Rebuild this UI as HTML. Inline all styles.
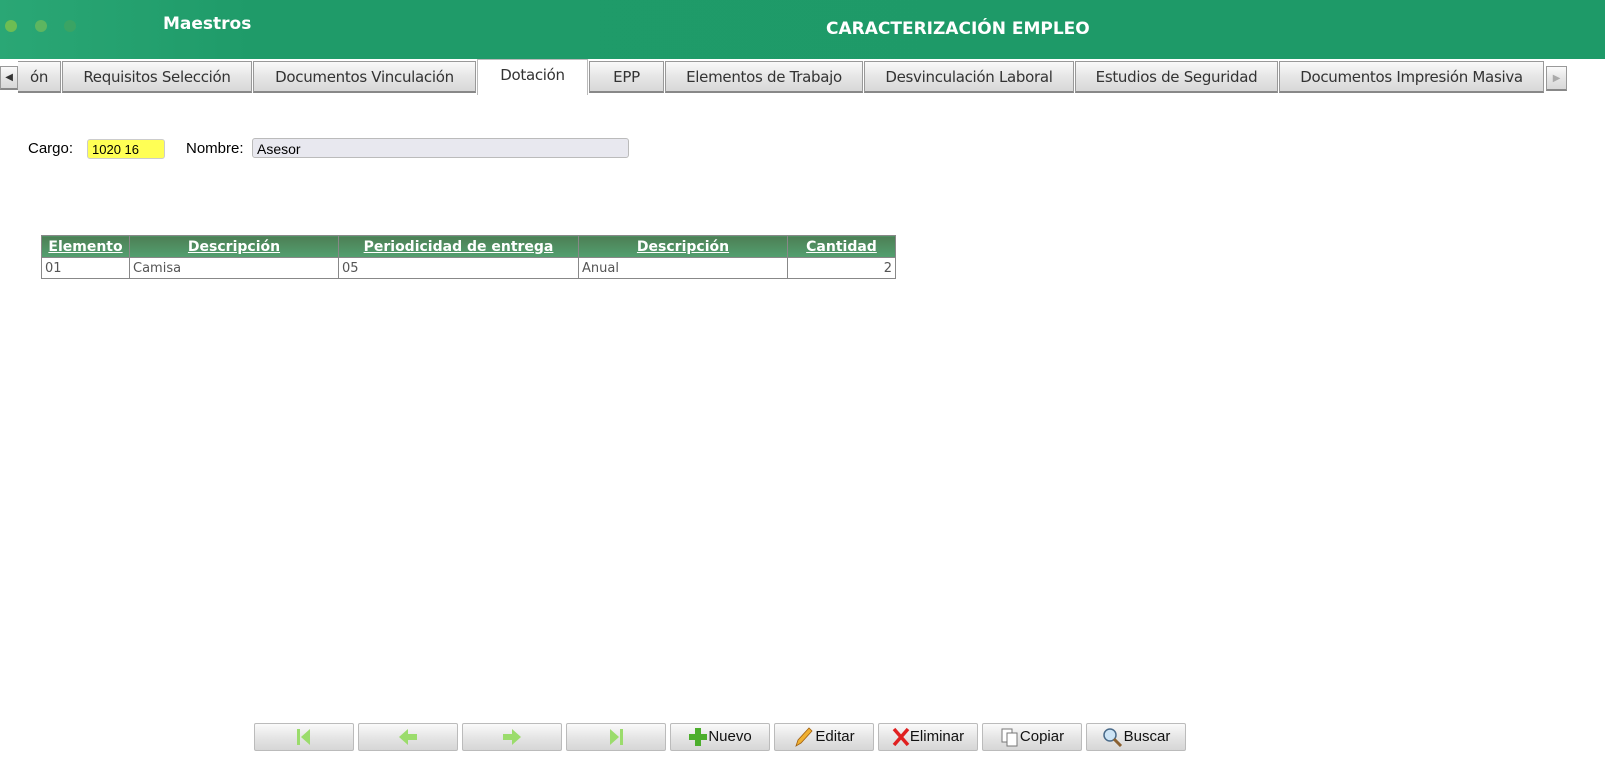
<!DOCTYPE html><html><head><meta charset="utf-8"><style>
body{margin:0;width:1605px;height:771px;background:#fff;font-family:"Liberation Sans",sans-serif;position:relative;overflow:hidden}
.hdr{position:absolute;left:0;top:0;width:1605px;height:59px;background:linear-gradient(90deg,#2aa775 0,#1f9b69 250px,#1e9a68 100%)}
.dot{position:absolute;top:20px;width:12px;height:12px;border-radius:50%}
.ht{position:absolute;color:#fff;font-weight:bold;font-family:"DejaVu Sans",sans-serif}
.tab{position:absolute;top:61px;height:32px;box-sizing:border-box;border:1px solid #999;border-bottom:2px solid #888;background:linear-gradient(#fafafa,#e6e6e6 50%,#d8d8d8);font-size:15px;color:#333;text-align:center;line-height:30px;font-family:"DejaVu Sans",sans-serif;letter-spacing:-.3px}
.tab.act{background:#fff;border-bottom:none;top:59px;height:36px;border-color:#bbb}
.btn{position:absolute;top:723px;width:100px;height:28px;box-sizing:border-box;border:1px solid #bbb;border-radius:2px;background:linear-gradient(#fafafa,#e4e4e4 55%,#d6d6d6);font-size:15px;line-height:26px;color:#111;display:flex;align-items:center;justify-content:center}
table{position:absolute;left:41px;top:235px;border-collapse:collapse;font-family:"DejaVu Sans",sans-serif;font-size:13px}
th{background:linear-gradient(#4d7f55,#53a070);color:#fff;text-decoration:underline;height:21px;padding:0;border:1px solid #888;font-size:14px}
td{border:1px solid #888;color:#555;height:20px;padding:0 3px}
</style></head><body>
<div class="hdr"></div>
<div class="dot" style="left:5px;background:#6dbd53"></div>
<div class="dot" style="left:35px;background:#5db660"></div>
<div class="dot" style="left:64px;background:#3aa464"></div>
<div class="ht" style="left:163px;top:14px;font-size:17px">Maestros</div>
<div class="ht" style="left:826px;top:19px;font-size:17px">CARACTERIZACIÓN EMPLEO</div>
<div class="tab" style="left:0;width:18px;top:66px;height:24px;line-height:22px;font-size:10px">◀</div>
<div class="tab" style="left:18px;width:43px;border-left:none">ón</div>
<div class="tab" style="left:62px;width:190px">Requisitos Selección</div>
<div class="tab" style="left:253px;width:223px">Documentos Vinculación</div>
<div class="tab act" style="left:477px;width:111px">Dotación</div>
<div class="tab" style="left:589px;width:75px">EPP</div>
<div class="tab" style="left:665px;width:198px">Elementos de Trabajo</div>
<div class="tab" style="left:864px;width:210px">Desvinculación Laboral</div>
<div class="tab" style="left:1075px;width:203px">Estudios de Seguridad</div>
<div class="tab" style="left:1279px;width:265px">Documentos Impresión Masiva</div>
<div class="tab" style="left:1546px;width:21px;top:66px;height:25px;line-height:23px;font-size:10px;color:#aaa">▶</div>
<div style="position:absolute;left:28px;top:140px;font-size:15px">Cargo:</div>
<div style="position:absolute;left:87px;top:139px;width:78px;background:#ffff55;border:1px solid #ccc;border-radius:3px;font-size:13px;line-height:19px;padding-left:4px;box-sizing:border-box;height:20px">1020 16</div>
<div style="position:absolute;left:186px;top:140px;font-size:15px">Nombre:</div>
<div style="position:absolute;left:252px;top:138px;width:377px;height:20px;background:#e8e8ef;border:1px solid #bbb;border-radius:3px;font-size:14px;line-height:21px;padding-left:4px;box-sizing:border-box">Asesor</div>
<table><tr><th style="width:87px">Elemento</th><th style="width:208px">Descripción</th><th style="width:239px">Periodicidad de entrega</th><th style="width:208px">Descripción</th><th style="width:107px">Cantidad</th></tr>
<tr><td>01</td><td>Camisa</td><td>05</td><td>Anual</td><td style="text-align:right">2</td></tr></table>
<div class="btn" style="left:254px"><svg width="20" height="20"><rect x="3" y="2" width="3" height="16" fill="#9bdc6c"/><path d="M16 2L7 10L16 18Z" fill="#9bdc6c"/></svg></div>
<div class="btn" style="left:358px"><svg width="22" height="20"><path d="M2 10L11 2V7H20V13H11V18Z" fill="#9bdc6c"/></svg></div>
<div class="btn" style="left:462px"><svg width="22" height="20"><path d="M20 10L11 2V7H2V13H11V18Z" fill="#9bdc6c"/></svg></div>
<div class="btn" style="left:566px"><svg width="20" height="20"><rect x="14" y="2" width="3" height="16" fill="#9bdc6c"/><path d="M4 2L13 10L4 18Z" fill="#9bdc6c"/></svg></div>
<div class="btn" style="left:670px"><svg width="20" height="20"><path d="M7 1H13V7H19V13H13V19H7V13H1V7H7Z" fill="#4cae2c"/></svg>Nuevo</div>
<div class="btn" style="left:774px"><svg width="22" height="20"><path d="M3 19L5 13L16 1L19 4L8 16Z" fill="#f0b030" stroke="#a06010" stroke-width=".8"/></svg>Editar</div>
<div class="btn" style="left:878px"><svg width="18" height="20"><path d="M2 2L16 18M16 2L2 18" stroke="#e02020" stroke-width="3.5"/></svg>Eliminar</div>
<div class="btn" style="left:982px"><svg width="20" height="20"><rect x="2" y="2" width="10" height="13" fill="#fff" stroke="#777"/><rect x="7" y="6" width="10" height="13" fill="#fff" stroke="#777"/></svg>Copiar</div>
<div class="btn" style="left:1086px"><svg width="22" height="20"><circle cx="8" cy="8" r="6" fill="#cde4f5" stroke="#4a6b8a" stroke-width="1.5"/><path d="M12 12L19 19" stroke="#8a6030" stroke-width="3"/></svg>Buscar</div>
</body></html>
